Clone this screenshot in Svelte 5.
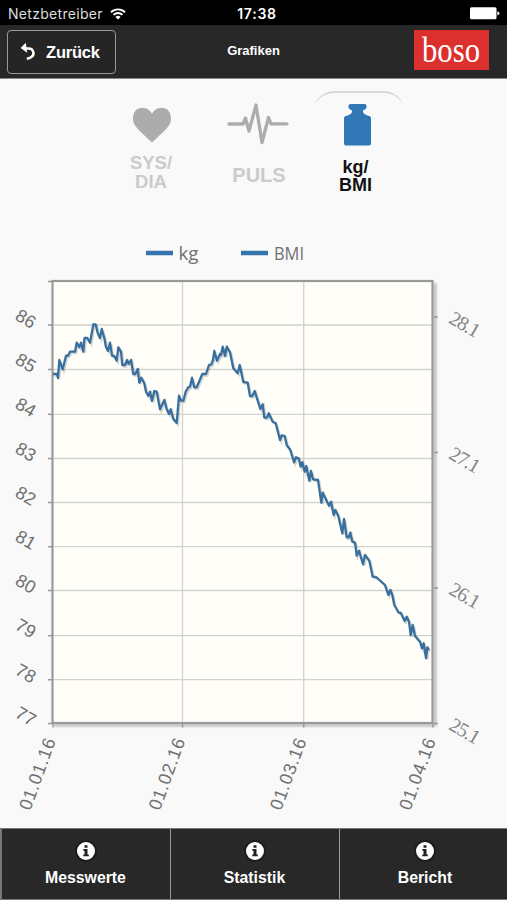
<script>
  const gridRows = [325, 369.5, 414.3, 458.5, 502.5, 546.7, 590.5, 635.7, 679.7];
  const leftLabels = [
    [86, 320], [85, 364], [84, 408.5], [83, 453], [82, 497],
    [81, 541], [80, 585], [79, 629.5], [78, 674.5], [77, 717.5]
  ];
  const rightLabels = [
    ['28.1', 317], ['27.1', 452.5], ['26.1', 588], ['25.1', 723.5]
  ];
  const dates = [
    ['01.01.16', 53], ['01.02.16', 182.5], ['01.03.16', 303.7], ['01.04.16', 433]
  ];
  const weight =
    '53,374 57,374 58,378 59.3,360 62.7,369.3 66,355.7 68,355.7 70,351.7 75,351.7 76.7,342.7 79.3,347.3 81,342.7 83.3,351.7 84.5,338 87.3,338 90,342.7 93.3,324.5 95.7,324.5 97.7,333 100,338 101.7,329 104.3,338 106,347 108,351 110,342.7 112,355.7 114.3,356 116.7,360.7 118.3,347.3 121,351.7 122.3,365 125,365 127,360 128.7,364 131,360 133.3,374 135.3,374 137.7,369 139.3,382.7 141.3,377.7 144.3,383.3 146,391.7 148.3,396 150,391.7 152,401 154.3,391 156.7,391.7 160,409.3 164.3,400 166.7,409.3 169,414 170.7,409.3 173.3,419 176.7,423 179,395.7 181,400.7 183.3,400.7 185.7,391.7 188.3,387.3 190,386.7 192,377.7 194.3,387.3 196.7,387.3 202.3,374 206,374 209,365 211.3,364.3 213,360 214.3,351 217,360.7 220,354 221,355 222.7,346.7 225,356 226.7,346.7 230,352.3 233.3,368.3 237.7,373.3 239.7,365 243.3,382 247.7,382.7 250,396 252.3,396 254.7,391 257.7,400.7 260.3,409 262.7,404.3 264.3,417.7 267,417.7 268.7,413.3 272.7,421.7 275.7,423.3 280,440 281.7,435.3 284.7,436 286.7,445 290.3,450 294.1,462.3 296,457.3 298.7,458.3 300.7,466.7 302.3,462.3 304.7,471.7 306.3,466 309.3,480.7 311,471 313,479.3 318,480 321.3,502.7 322.7,492.7 329,505.7 331,501.7 333.7,515 335.3,510 338.3,516 342.3,533.3 344,519 346.7,537.3 348.7,537.3 350.3,532.7 352.3,541.7 355,542.7 356.7,555.7 359,550.7 363,564.3 365,555 369.3,560.7 372.7,576.7 376,577 385,585 388.3,595 390.3,590 392.3,595 394.3,605 398.7,612.7 400.7,612.7 404.7,621 406.7,616.7 409,621.7 410.7,635 412.7,625 415,636 420,641.7 422,648.3 423.7,643.3 426,658 427.3,647.3 429,650';
  const actions = ['Messwerte', 'Statistik', 'Bericht'];
</script>

<div class="app">
  <div class="status">
    <span class="carrier">Netzbetreiber
      <svg width="16" height="12" viewBox="0 0 16 12" fill="none" stroke="#fff" stroke-width="1.9">
        <path d="M1 4.2a10 10 0 0 1 14 0M3.5 6.9a6.4 6.4 0 0 1 9 0" />
        <path d="M8 11.5 5.4 8.9a3.8 3.8 0 0 1 5.2 0z" fill="#fff" stroke="none" />
      </svg>
    </span>
    <span class="time">17:38</span>
    <svg class="battery" width="30" height="13" viewBox="0 0 30 13" fill="#fff">
      <rect width="26.5" height="12" y=".3" rx="1.5" /><path d="M27.4 4.2q2 .5 2 2.1t-2 2.1z" />
    </svg>
  </div>

  <header>
    <button class="back">
      <svg width="17" height="19" viewBox="0 0 17 19">
        <path d="M4 6.4h4.800a4.700 4.700 0 0 1 2.600 8.600q-1.700 1.300-4.600 1.800" fill="none" stroke="#fff" stroke-width="2.5" />
        <path d="M.6 6 5.800.8l1.400 10z" fill="#fff" />
      </svg>
      Zurück
    </button>
    <h1>Grafiken</h1>
    <svg class="logo" width="75" height="40" viewBox="0 0 75 40">
      <rect width="75" height="40" fill="#dc302f" />
      <text x="8" y="32" font-size="35" textLength="58" lengthAdjust="spacingAndGlyphs">boso</text>
    </svg>
  </header>

  <nav class="tabs">
    <div class="tab sys">
      <svg width="40" height="36" viewBox="0 0 40 36" fill="#acacac">
        <path d="M20 35.5C16 31.500 5 22.500 2.200 17C-.5 11.500 1 .7 10.500.7C15 .7 18.500 3.500 20 7C21.500 3.500 25 .7 29.500.7C39 .7 40.500 11.500 37.800 17C35 22.500 24 31.500 20 35.5z" />
      </svg>
      <span>SYS/<br />DIA</span>
    </div>
    <div class="tab puls">
      <svg width="62" height="42" viewBox="0 0 62 42" fill="none" stroke="#acacac" stroke-width="3.300" stroke-linecap="round" stroke-linejoin="round">
        <path d="M2 21h14l2.500-6L22 28 29 2l6 37.500L41.500 14.500l2.500 6.300h16" />
      </svg>
      <span>PULS</span>
    </div>
    <div class="tab active">
      <svg width="90" height="56" viewBox="0 0 90 56">
        <defs>
          <linearGradient id="edge" x1="0" y1="0" x2="0" y2="1"><stop stop-color="#cfcfcf" /><stop offset="1" stop-color="#f9f9f9" /></linearGradient>
        </defs>
        <path d="M1 14Q6 1.500 21 1h48Q84 1.500 89 14" fill="none" stroke="url(#edge)" stroke-width="1.700" />
        <path d="M36.500 13h14.200q1.800 0 1.800 2v1q0 1.400-1.300 2.200L49 19.500v1.700q1 2.300 4.500 3.200 3.500.6 3.500 2.600v25.500q0 2-2 2H32q-2 0-2-2V27q0-2 3.500-2.600 3.500-.9 4.500-3.200v-1.700l-2.200-1.300q-1.300-.8-1.300-2.200v-1q0-2 2-2z" fill="#3177b5" />
      </svg>
      <span>kg/<br />BMI</span>
    </div>
  </nav>

  <svg class="chart" width="507" height="602" viewBox="0 225 507 602">
    <defs>
      <filter id="soft" x="-5%" y="-5%" width="110%" height="110%"><feGaussianBlur stdDeviation="1" /></filter>
    </defs>
    <path d="M146 253h27M241 253h27" stroke="#3474ad" stroke-width="4.600" />
    <g class="legend">
      <text x="178.500" y="260" textLength="20" lengthAdjust="spacingAndGlyphs">kg</text>
      <text x="274" y="260" textLength="30" lengthAdjust="spacingAndGlyphs">BMI</text>
    </g>

    <path d="M54 725H435V283" fill="none" stroke="#bbb" stroke-width="3" filter="url(#soft)" />
    <rect x="52.500" y="281" width="380" height="441.500" fill="#fffef8" />
    <g stroke="#d2d2ce" stroke-width="1.300">
      {#each gridRows as y}<path d="M53 {y}H432" />{/each}
      <path d="M182.500 282V722M303.700 282V722" />
    </g>
    <g stroke="#999" stroke-width="1.500">
      {#each [281.500, ...gridRows, 723.500] as y}<path d="M48 {y}H52" />{/each}
      {#each rightLabels as [, y]}<path d="M434 {y}H438" />{/each}
      {#each dates as [, x]}<path d="M{x} 723v4.500" />{/each}
    </g>
    <rect x="52.500" y="281" width="380" height="442" fill="none" stroke="#999" stroke-width="2.200" />
    <polyline points={weight} transform="translate(1.300 1.500)" fill="none" stroke="#777" stroke-opacity=".3" stroke-width="2.300" />
    <polyline points={weight} fill="none" stroke="#376f9f" stroke-width="2.300" stroke-linejoin="round" />

    <g class="axis">
      {#each leftLabels as [label, y]}
        <text transform="translate(26 {y - 1.500}) rotate(30)" text-anchor="middle" y="6.500">{label}</text>
      {/each}
      {#each dates as [label, x]}
        <text transform="translate({x - 15.500} 774) rotate(-70)" text-anchor="middle" y="6" textLength="75">{label}</text>
      {/each}
    </g>
    <g class="bmi">
      {#each rightLabels as [label, y]}
        <text transform="translate(464.500 {y + 8}) rotate(30)" text-anchor="middle" y="6" textLength="32">{label}</text>
      {/each}
    </g>
  </svg>

  <footer>
    {#each actions as action}
      <button class="action">
        <svg width="24" height="24" viewBox="0 0 24 24">
          <circle cx="12" cy="12" r="11" fill="#1d1d1d" />
          <circle cx="12" cy="12" r="9" fill="#fff" />
          <path d="M10.500 6.200h3v2.500h-3zM9.300 10h4.200v5.600h1.300v1.700H9.300v-1.700h1.200v-3.900H9.300z" fill="#222" />
        </svg>
        {action}
      </button>
    {/each}
  </footer>
</div>

<style>
  :global(body) { margin: 0; background: #f9f9f9; }
  .app {
    width: 507px; height: 900px; overflow: hidden;
    display: flex; flex-direction: column;
    background: #f9f9f9; font-family: "Liberation Sans", Arial, sans-serif;
  }
  svg { display: block; flex: none; }
  .status {
    height: 25px; flex: none; box-sizing: border-box; padding: 2px 7px 0 8px;
    display: grid; grid-template-columns: 1fr auto 1fr; align-items: center;
    background: #000; color: #fff; font-family: Inter, "Liberation Sans", sans-serif; font-size: 14px;
  }
  .carrier { display: flex; align-items: center; gap: 7px; color: #ddd; letter-spacing: .3px; }
  .time { font-weight: 600; font-size: 14px; letter-spacing: .75px; padding-left: 6px; }
  .battery { justify-self: end; }
  header {
    height: 54px; flex: none; box-sizing: border-box; padding: 5px 18px 0 7px;
    display: grid; grid-template-columns: 1fr auto 1fr; align-items: start;
    background: #282828; border-bottom: 1.500px solid #888; color: #fff;
  }
  button { font-family: inherit; font-weight: 700; color: #fff; }
  .back {
    width: 109px; height: 44px; padding: 1px 0 0 12px;
    display: flex; align-items: center; gap: 9px;
    border: 1px solid #999; border-radius: 4px; background: #252525; font-size: 16.500px; letter-spacing: -.2px;
  }
  .back svg { margin-top: -2px; }
  h1 { margin: 13px 0 0 11px; font-size: 13px; line-height: 15px; letter-spacing: 0; }
  .logo { justify-self: end; }
  .logo text { font-family: "Liberation Serif", serif; fill: #fff; }
  .tabs { height: 146px; flex: none; display: flex; padding-left: 96px; box-sizing: border-box; }
  .tab {
    width: 110px; display: flex; flex-direction: column; align-items: center;
    color: #cbcbcb; text-align: center; font-size: 18.500px; font-weight: 700; line-height: 19px;
  }
  .sys svg { margin: 28px 0 10px 1px; }
  .puls { width: 104px; }
  .puls svg { margin: 24px 0 21px; }
  .puls span { font-size: 20px; padding-left: 2px; }
  .tab.active { width: 90px; margin-left: 4px; color: #111; }
  .active svg { margin: 12px 0 11px; }
  .active span { font-size: 18px; line-height: 18px; padding-right: 7px; }
  .chart { margin: 0 0 1px; }
  .chart text { fill: #707070; }
  .legend { font-family: "Open Sans", "Noto Sans", sans-serif; font-size: 19px; }
  .axis { font-size: 18px; }
  .bmi { font-family: "Liberation Serif", serif; font-size: 20px; }
  .bmi text { fill: #858585; }
  footer {
    flex: 1; display: flex; box-sizing: border-box;
    border: solid #777; border-width: 1px 0 1.500px 2px; background: #282828;
  }
  .action {
    flex: none; width: 169px; box-sizing: border-box;
    display: flex; flex-direction: column; align-items: center; gap: 6px;
    margin: 0; padding: 10px 1px 0 0; border: 0; border-right: 1px solid #999; background: none;
    font-size: 15.800px; line-height: 18px;
  }
  .action:last-child { border-right: 0; padding-left: 2px; }
</style>
